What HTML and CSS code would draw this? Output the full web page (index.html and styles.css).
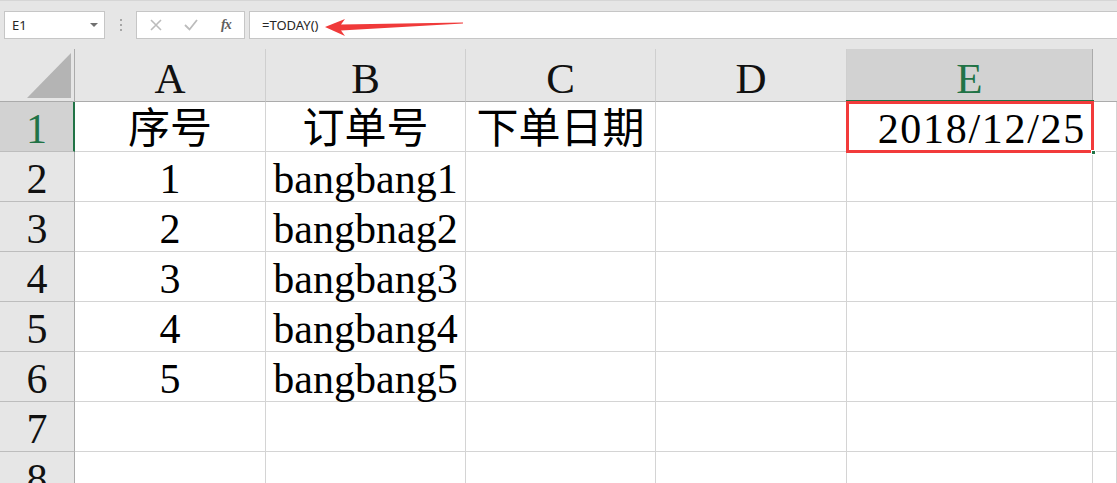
FILE: index.html
```html
<!DOCTYPE html>
<html lang="zh-CN">
<head>
<meta charset="utf-8">
<title>Excel TODAY</title>
<link rel="stylesheet" href="styles.css">
</head>
<body>
<div class="app">
  <div class="fbar">
    <div class="namebox"><span class="ref">E1</span><span class="caret"></span></div>
    <div class="grip"><i></i><i></i><i></i></div>
    <div class="btns">
      <svg class="ico" width="14" height="14" viewBox="0 0 14 14"><path d="M2 2 L12 12 M12 2 L2 12" stroke="#bcbcbc" stroke-width="1.6" fill="none"/></svg>
      <svg class="ico" width="16" height="14" viewBox="0 0 16 14"><path d="M2 7 L6.5 11.5 L14 2" stroke="#bcbcbc" stroke-width="1.8" fill="none"/></svg>
      <span class="fx">fx</span>
    </div>
    <div class="formula">=TODAY()</div>
    <svg class="arrow" width="1117" height="49" viewBox="0 0 1117 49">
      <path d="M325 27 L345 19 L341 24.5 L463 22.5 L463 23.5 L341 30.5 L345 36 Z" fill="#f03a3a"/>
    </svg>
  </div>
  <div class="sheet">
    <div class="corner"><span class="tri"></span></div>
    <div class="ch">A</div>
    <div class="ch">B</div>
    <div class="ch">C</div>
    <div class="ch">D</div>
    <div class="ch ch-sel">E</div>
    <div class="ch ch-end"></div>

    <div class="rh rh-sel">1</div>
    <div class="c">序号</div>
    <div class="c">订单号</div>
    <div class="c">下单日期</div>
    <div class="c"></div>
    <div class="c c-date">2018/12/25<span class="green-sel"></span><span class="red-mark"></span><span class="handle"></span></div>
    <div class="c"></div>

    <div class="rh">2</div>
    <div class="c">1</div>
    <div class="c">bangbang1</div>
    <div class="c"></div><div class="c"></div><div class="c"></div><div class="c"></div>

    <div class="rh">3</div>
    <div class="c">2</div>
    <div class="c">bangbnag2</div>
    <div class="c"></div><div class="c"></div><div class="c"></div><div class="c"></div>

    <div class="rh">4</div>
    <div class="c">3</div>
    <div class="c">bangbang3</div>
    <div class="c"></div><div class="c"></div><div class="c"></div><div class="c"></div>

    <div class="rh">5</div>
    <div class="c">4</div>
    <div class="c">bangbang4</div>
    <div class="c"></div><div class="c"></div><div class="c"></div><div class="c"></div>

    <div class="rh">6</div>
    <div class="c">5</div>
    <div class="c">bangbang5</div>
    <div class="c"></div><div class="c"></div><div class="c"></div><div class="c"></div>

    <div class="rh">7</div>
    <div class="c"></div><div class="c"></div><div class="c"></div><div class="c"></div><div class="c"></div><div class="c"></div>

    <div class="rh">8</div>
    <div class="c"></div><div class="c"></div><div class="c"></div><div class="c"></div><div class="c"></div><div class="c"></div>
  </div>
</div>
</body>
</html>
```

FILE: styles.css
```css
* { box-sizing: border-box; }
html, body { margin: 0; padding: 0; }
body {
  width: 1117px;
  height: 483px;
  overflow: hidden;
  background: #e6e6e6;
  font-family: "Noto Sans", "Open Sans", sans-serif;
}
.app { width: 1117px; }

/* formula bar */
.fbar {
  position: relative;
  height: 49px;
  display: flex;
  align-items: flex-start;
  padding-top: 10px;
  border-top: 1px solid #d6d6d6;
  background: #e6e6e6;
}
.namebox {
  margin-left: 4px;
  width: 101px;
  height: 28px;
  background: #fff;
  border: 1px solid #c6c6c6;
  display: flex;
  align-items: center;
  justify-content: space-between;
  padding: 0 6px 0 7px;
  font-size: 13px;
  color: #262626;
}
.caret {
  width: 0; height: 0;
  border-left: 4px solid transparent;
  border-right: 4px solid transparent;
  border-top: 4px solid #707070;
}
.grip {
  width: 31px;
  height: 28px;
  display: flex;
  flex-direction: column;
  align-items: center;
  justify-content: center;
  gap: 3px;
}
.grip i {
  display: block;
  width: 2px; height: 2px;
  background: #a6a6a6;
}
.btns {
  width: 109px;
  height: 28px;
  background: #fff;
  border: 1px solid #c6c6c6;
  display: flex;
  align-items: center;
  padding-left: 12px;
  gap: 20px;
}
.ico { display: block; }
.fx {
  font-family: "Liberation Serif", serif;
  font-style: italic;
  font-weight: bold;
  font-size: 14px;
  color: #5e5e5e;
  margin-left: 2px;
  letter-spacing: -1px;
}
.formula {
  margin-left: 4px;
  flex: 1;
  height: 28px;
  background: #fff;
  border: 1px solid #c6c6c6;
  border-right: none;
  padding-left: 12px;
  font-size: 13px;
  line-height: 26px;
  color: #262626;
}
.arrow {
  position: absolute;
  left: 0; top: -1px;
  pointer-events: none;
}

/* sheet grid */
.sheet {
  display: grid;
  grid-template-columns: 75px 191px 200px 190px 191px 246px 1fr;
  grid-template-rows: 53px repeat(8, 50px);
  font-family: "Liberation Serif", "Noto Sans CJK SC", serif;
  font-size: 42px;
  color: #000;
}
.corner {
  position: relative;
  background: #e6e6e6;
  border-right: 1px solid #ababab;
  border-bottom: 1px solid #ababab;
}
.tri {
  position: absolute;
  left: 27px; top: 4px;
  width: 0; height: 0;
  border-left: 44px solid transparent;
  border-bottom: 45px solid #b4b4b4;
}
.ch {
  background: #e6e6e6;
  border-right: 1px solid #cfcfcf;
  border-bottom: 1px solid #ababab;
  text-align: center;
  padding-top: 8px;
  line-height: 43px;
  font-size: 43px;
  color: #111;
}
.ch-sel {
  background: #d2d2d2;
  color: #217346;
  border-right-color: #ababab;
  border-bottom: 1px solid #217346;
}
.ch-end { border-right: none; }
.rh {
  background: #e6e6e6;
  border-right: 1px solid #ababab;
  border-bottom: 1px solid #bdbdbd;
  text-align: center;
  padding-top: 6px;
  line-height: 43px;
  color: #111;
}
.rh-sel {
  background: #d2d2d2;
  color: #217346;
  border-right: 2px solid #217346;
}
.c {
  position: relative;
  background: #fff;
  border-right: 1px solid #d4d4d4;
  border-bottom: 1px solid #d4d4d4;
  text-align: center;
  padding-top: 6px;
  line-height: 43px;
  white-space: nowrap;
}
.c-date {
  text-align: right;
  padding-right: 6px;
  letter-spacing: 1.7px;
}
.green-sel {
  position: absolute;
  z-index: 1;
  left: -1px; top: -2px; right: -2px; bottom: -2px;
  border: 2px solid #217346;
}
.red-mark {
  position: absolute;
  z-index: 2;
  left: -1px; top: -1px; right: -2px; bottom: -2px;
  border: 3px solid #f23b3b;
}
.handle {
  position: absolute;
  z-index: 3;
  right: -4px; bottom: -4px;
  width: 5px; height: 5px;
  background: #217346;
  border: 1px solid #fff;
}
```
